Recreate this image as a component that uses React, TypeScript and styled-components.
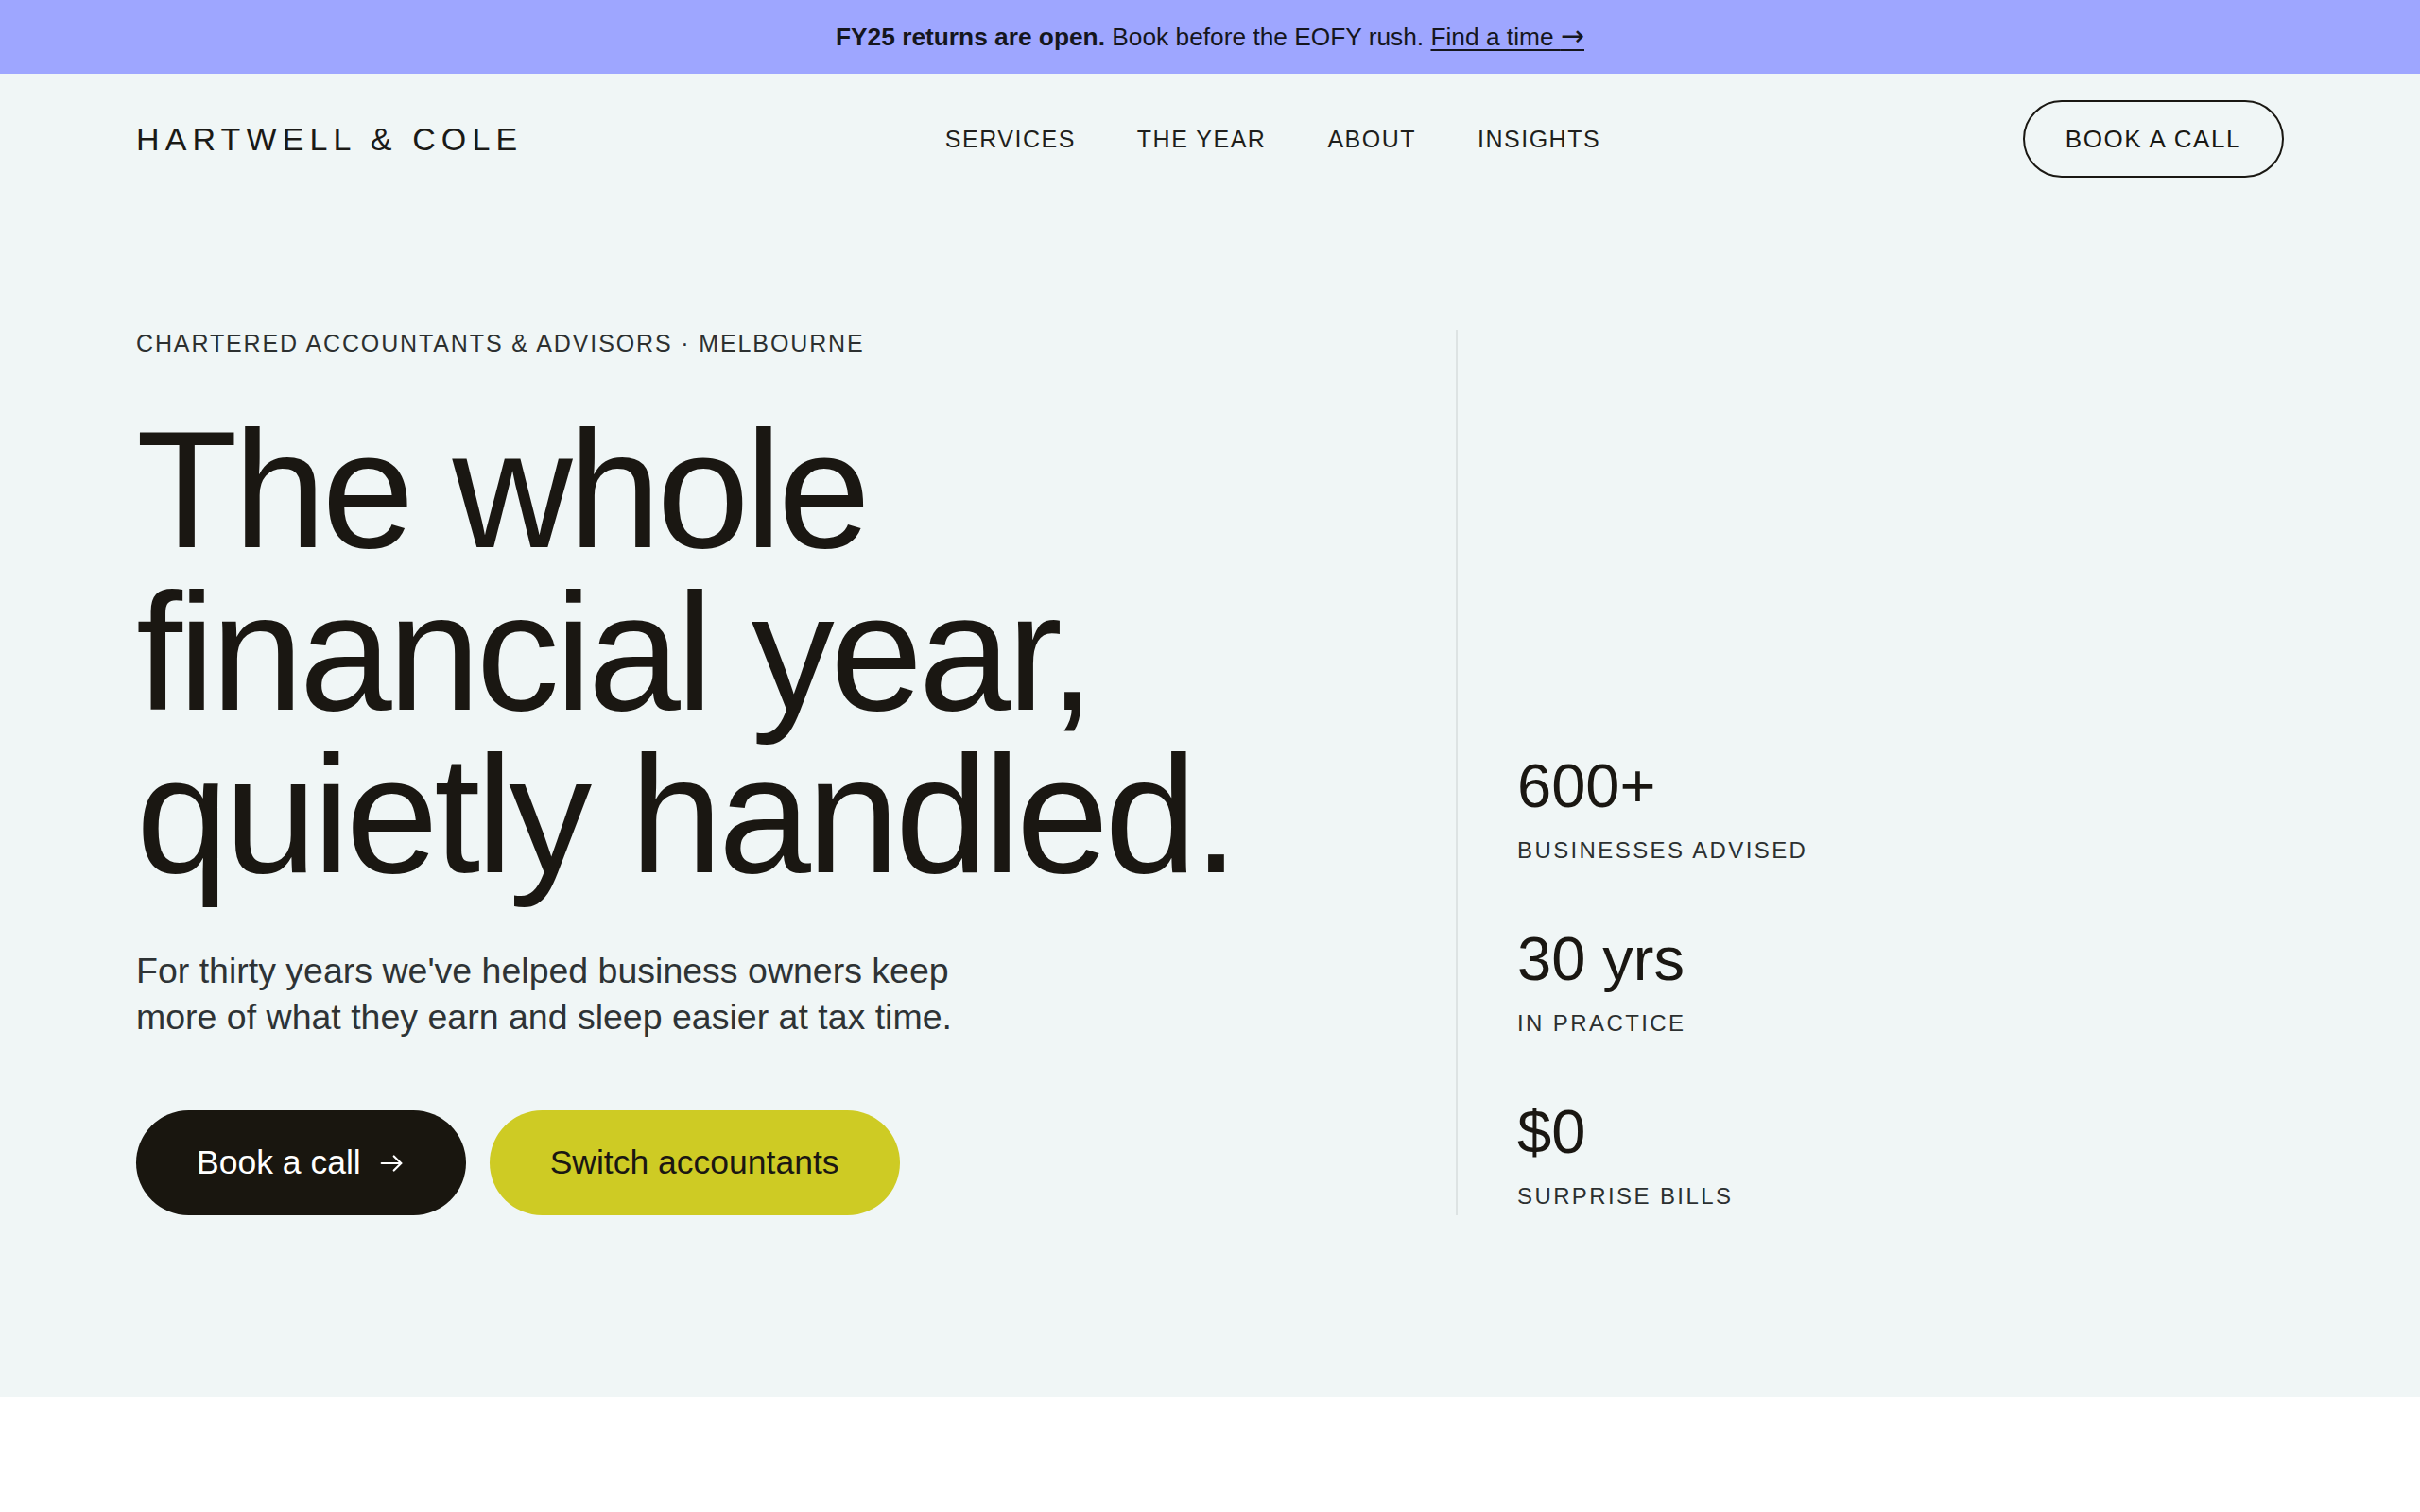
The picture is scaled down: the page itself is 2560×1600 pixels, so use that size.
import React from "react";
import styled, { createGlobalStyle } from "styled-components";

const GlobalStyle = createGlobalStyle`
  *, *::before, *::after { box-sizing: border-box; }
  html, body { margin: 0; padding: 0; }
  body {
    background: #ffffff;
    font-family: "Liberation Sans", Arial, Helvetica, sans-serif;
    color: #1a1712;
  }
`;

const Banner = styled.div`
  height: 78px;
  display: flex;
  align-items: center;
  justify-content: center;
  background: #9ea6ff;
  color: #15161d;
  font-size: 26.3px;
  white-space: pre;
`;

const BannerStrong = styled.strong`
  font-weight: 700;
`;

const BannerLink = styled.a`
  color: inherit;
  text-decoration: underline;
  text-decoration-thickness: 2px;
  text-underline-offset: 4px;
`;

const BannerArrow = styled.span`
  font-family: "DejaVu Sans", sans-serif;
  font-size: 30px;
  line-height: 1;
`;

const Top = styled.div`
  background: #f0f6f6;
`;

const Header = styled.header`
  height: 138px;
  padding: 0 144px;
  display: flex;
  align-items: center;
  justify-content: space-between;
`;

const Logo = styled.a`
  font-size: 34px;
  letter-spacing: 0.18em;
  color: #1b1a16;
  text-decoration: none;
`;

const Nav = styled.nav`
  display: flex;
  gap: 65px;
`;

const NavLink = styled.a`
  font-size: 25px;
  letter-spacing: 0.06em;
  color: #1f1f1c;
  text-decoration: none;
`;

const CallButton = styled.a`
  height: 82px;
  padding: 0 43px;
  display: inline-flex;
  align-items: center;
  justify-content: center;
  border: 2px solid #1a1813;
  border-radius: 999px;
  font-size: 26px;
  letter-spacing: 0.06em;
  color: #1a1813;
  text-decoration: none;
`;

const Hero = styled.section`
  display: grid;
  grid-template-columns: minmax(0, 1fr) 876px;
  column-gap: 64px;
  padding: 133px 144px 192px;
`;

const Intro = styled.div`
  display: flex;
  flex-direction: column;
  align-items: flex-start;
`;

const Eyebrow = styled.p`
  margin: 0 0 54px;
  font-size: 25px;
  line-height: 29px;
  letter-spacing: 0.075em;
  color: #2c3030;
`;

const Headline = styled.h1`
  margin: 0;
  font-size: 176px;
  line-height: 172px;
  font-weight: 400;
  letter-spacing: -0.025em;
  color: #1a1712;
`;

const Lead = styled.p`
  margin: 55px 0 0;
  max-width: 930px;
  font-size: 37.5px;
  line-height: 49px;
  color: #2e3335;
`;

const Actions = styled.div`
  margin-top: 74px;
  display: flex;
  gap: 25px;
`;

const Pill = styled.a<{ $tone: "dark" | "lime" }>`
  height: 111px;
  padding: ${(p) => (p.$tone === "dark" ? "0 66px 0 64px" : "0 64px")};
  display: inline-flex;
  align-items: center;
  gap: 19px;
  border-radius: 999px;
  font-size: 35.5px;
  text-decoration: none;
  background: ${(p) => (p.$tone === "dark" ? "#19160f" : "#cecb24")};
  color: ${(p) => (p.$tone === "dark" ? "#ffffff" : "#1a1712")};
`;

const Stats = styled.aside`
  border-left: 2px solid #dde3e3;
  padding: 0 0 6px 63px;
  display: flex;
  flex-direction: column;
  justify-content: flex-end;
  gap: 66px;
`;

const Stat = styled.div`
  display: flex;
  flex-direction: column;
  gap: 18px;
`;

const StatValue = styled.span`
  font-size: 65px;
  line-height: 70px;
  color: #1a1712;
`;

const StatLabel = styled.span`
  font-size: 24px;
  line-height: 29px;
  letter-spacing: 0.1em;
  color: #2c3030;
`;

const ArrowIcon = () => (
  <svg width="26" height="26" viewBox="0 0 24 24" fill="none" stroke="currentColor" strokeWidth="2" strokeLinecap="round" strokeLinejoin="round" aria-hidden="true">
    <path d="M2.5 12h19" />
    <path d="M14.5 5l7 7-7 7" />
  </svg>
);

const stats = [
  { value: "600+", label: "BUSINESSES ADVISED" },
  { value: "30 yrs", label: "IN PRACTICE" },
  { value: "$0", label: "SURPRISE BILLS" },
];

export default function App() {
  return (
    <>
      <GlobalStyle />
      <Banner>
        <BannerStrong>FY25 returns are open.</BannerStrong>
        {" Book before the EOFY rush. "}
        <BannerLink href="#">
          Find a time <BannerArrow>→</BannerArrow>
        </BannerLink>
      </Banner>
      <Top>
        <Header>
          <Logo href="#">HARTWELL &amp; COLE</Logo>
          <Nav>
            <NavLink href="#">SERVICES</NavLink>
            <NavLink href="#">THE YEAR</NavLink>
            <NavLink href="#">ABOUT</NavLink>
            <NavLink href="#">INSIGHTS</NavLink>
          </Nav>
          <CallButton href="#">BOOK A CALL</CallButton>
        </Header>
        <Hero>
          <Intro>
            <Eyebrow>CHARTERED ACCOUNTANTS &amp; ADVISORS · MELBOURNE</Eyebrow>
            <Headline>
              The whole
              <br />
              financial year,
              <br />
              quietly handled.
            </Headline>
            <Lead>
              For thirty years we've helped business owners keep more of what they earn and sleep easier at tax time.
            </Lead>
            <Actions>
              <Pill href="#" $tone="dark">
                Book a call
                <ArrowIcon />
              </Pill>
              <Pill href="#" $tone="lime">
                Switch accountants
              </Pill>
            </Actions>
          </Intro>
          <Stats>
            {stats.map((s) => (
              <Stat key={s.label}>
                <StatValue>{s.value}</StatValue>
                <StatLabel>{s.label}</StatLabel>
              </Stat>
            ))}
          </Stats>
        </Hero>
      </Top>
    </>
  );
}
